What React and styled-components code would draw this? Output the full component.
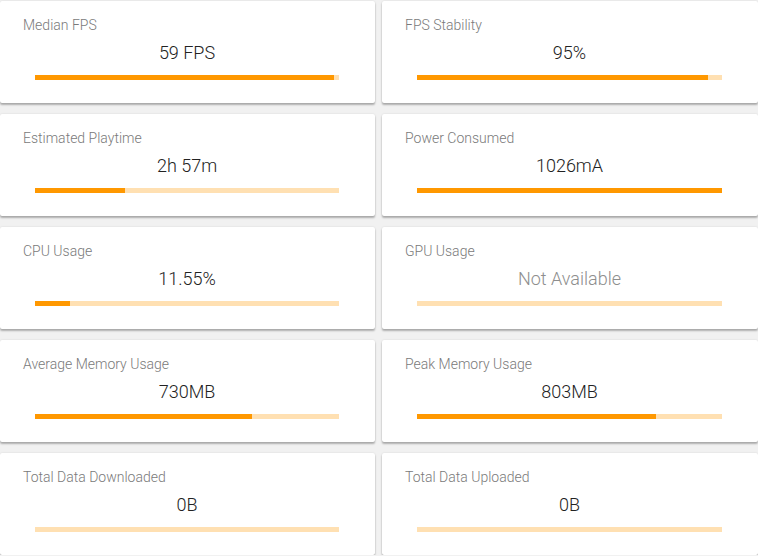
import React from "react";
import styled, { createGlobalStyle } from "styled-components";

const Global = createGlobalStyle`
  html, body { margin: 0; padding: 0; background: #f1f1f1; }
  body { font-family: Roboto, "Noto Sans", Arial, sans-serif; }
`;

const Grid = styled.div`
  display: grid;
  grid-template-columns: 375px 376px;
  column-gap: 7px;
  row-gap: 11px;
  padding-top: 1px;
  width: 758px;
`;

const Card = styled.div`
  background: #fff;
  height: 102px;
  box-sizing: border-box;
  padding: 14px 36px 0 35px;
  border-radius: 2px;
  box-shadow: 0 2px 2px rgba(0, 0, 0, 0.28), 0 0 2px rgba(0, 0, 0, 0.12);
`;

const Label = styled.div`
  margin-left: -12px;
  font-size: 14px;
  font-weight: 300;
  line-height: 20px;
  color: #7a7a7a;
`;

const Value = styled.div`
  margin-top: 6px;
  text-align: center;
  font-size: 18px;
  font-weight: 300;
  line-height: 24px;
  color: ${(p) => (p.$muted ? "#8e8e8e" : "#222")};
`;

const Track = styled.div`
  margin-top: 10px;
  height: 5px;
  background: #ffe0b2;
`;

const Fill = styled.div`
  height: 100%;
  background: #ff9800;
`;

const metrics = [
  ["Median FPS", "59 FPS", 98.5],
  ["FPS Stability", "95%", 95.4],
  ["Estimated Playtime", "2h 57m", 29.6],
  ["Power Consumed", "1026mA", 100],
  ["CPU Usage", "11.55%", 11.55],
  ["GPU Usage", "Not Available", 0, true],
  ["Average Memory Usage", "730MB", 71.4],
  ["Peak Memory Usage", "803MB", 78.4],
  ["Total Data Downloaded", "0B", 0],
  ["Total Data Uploaded", "0B", 0],
];

export default function App() {
  return (
    <>
      <Global />
      <Grid>
        {metrics.map(([label, value, pct, muted]) => (
          <Card key={label}>
            <Label>{label}</Label>
            <Value $muted={muted}>{value}</Value>
            <Track>
              <Fill style={{ width: `${pct}%` }} />
            </Track>
          </Card>
        ))}
      </Grid>
    </>
  );
}
